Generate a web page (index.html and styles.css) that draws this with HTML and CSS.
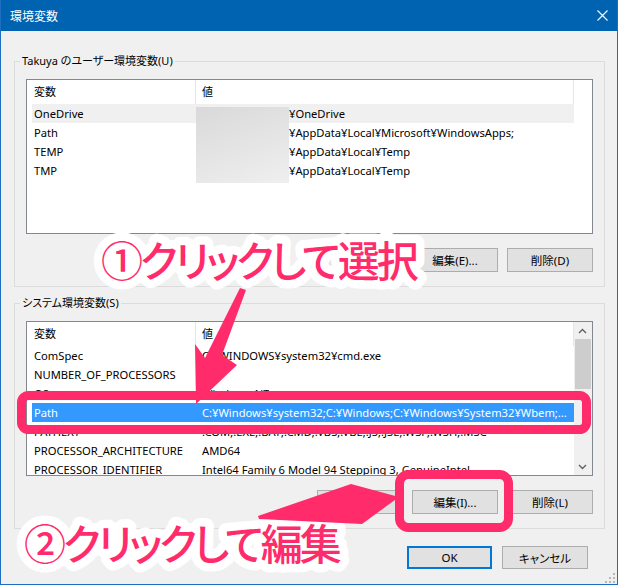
FILE: index.html
```html
<!DOCTYPE html>
<html lang="ja">
<head>
<meta charset="utf-8">
<title>環境変数</title>
<link rel="stylesheet" href="styles.css">
</head>
<body>
<div class="window">
  <div class="titlebar">
    <span class="title">環境変数</span>
    <svg class="close" width="11" height="11" viewBox="0 0 11 11"><path d="M0.5 0.5 L10.5 10.5 M10.5 0.5 L0.5 10.5" stroke="#fff" stroke-width="1.1" fill="none"/></svg>
  </div>
  <div class="content">
    <section class="group">
      <div class="group-label">Takuya のユーザー環境変数(U)</div>
      <div class="listview">
        <div class="lv-main">
          <div class="lv-head"><div class="h-name">変数</div><div class="h-val">値</div></div>
          <div class="row hot"><span class="c-name">OneDrive</span><span class="c-val"><span class="mask"></span>¥OneDrive</span></div>
          <div class="row"><span class="c-name">Path</span><span class="c-val"><span class="mask"></span>¥AppData¥Local¥Microsoft¥WindowsApps;</span></div>
          <div class="row"><span class="c-name">TEMP</span><span class="c-val"><span class="mask"></span>¥AppData¥Local¥Temp</span></div>
          <div class="row"><span class="c-name">TMP</span><span class="c-val"><span class="mask"></span>¥AppData¥Local¥Temp</span></div>
        </div>
        <div class="sb-space"></div>
        <div class="blur"></div>
      </div>
      <div class="btns">
        <button class="btn">新規(N)...</button>
        <button class="btn">編集(E)...</button>
        <button class="btn">削除(D)</button>
      </div>
    </section>

    <section class="group sys">
      <div class="group-label">システム環境変数(S)</div>
      <div class="listview">
        <div class="lv-main">
          <div class="lv-head"><div class="h-name">変数</div><div class="h-val">値</div></div>
          <div class="row"><span class="c-name">ComSpec</span><span class="c-val">C:¥WINDOWS¥system32¥cmd.exe</span></div>
          <div class="row"><span class="c-name">NUMBER_OF_PROCESSORS</span><span class="c-val">4</span></div>
          <div class="row"><span class="c-name">OS</span><span class="c-val">Windows_NT</span></div>
          <div class="row selected"><span class="c-name">Path</span><span class="c-val">C:¥Windows¥system32;C:¥Windows;C:¥Windows¥System32¥Wbem;...</span></div>
          <div class="row"><span class="c-name">PATHEXT</span><span class="c-val">.COM;.EXE;.BAT;.CMD;.VBS;.VBE;.JS;.JSE;.WSF;.WSH;.MSC</span></div>
          <div class="row"><span class="c-name">PROCESSOR_ARCHITECTURE</span><span class="c-val">AMD64</span></div>
          <div class="row"><span class="c-name">PROCESSOR_IDENTIFIER</span><span class="c-val">Intel64 Family 6 Model 94 Stepping 3, GenuineIntel</span></div>
        </div>
        <div class="scrollbar">
          <div class="sb-btn"><svg width="9" height="6" viewBox="0 0 9 6"><path d="M1 5 L4.5 1.5 L8 5" stroke="#606060" stroke-width="1.4" fill="none"/></svg></div>
          <div class="sb-thumb"></div>
          <div class="sb-track"></div>
          <div class="sb-btn"><svg width="9" height="6" viewBox="0 0 9 6"><path d="M1 1 L4.5 4.5 L8 1" stroke="#606060" stroke-width="1.4" fill="none"/></svg></div>
        </div>
      </div>
      <div class="btns">
        <button class="btn">新規(W)...</button>
        <button class="btn">編集(I)...</button>
        <button class="btn">削除(L)</button>
      </div>
    </section>

    <div class="footer">
      <button class="btn ok">OK</button>
      <button class="btn">キャンセル</button>
    </div>
  </div>
  <svg class="grip" width="10" height="10" viewBox="0 0 10 10" fill="#b8b8b8">
    <rect x="8" y="0" width="2" height="2"/><rect x="4" y="4" width="2" height="2"/><rect x="8" y="4" width="2" height="2"/>
    <rect x="0" y="8" width="2" height="2"/><rect x="4" y="8" width="2" height="2"/><rect x="8" y="8" width="2" height="2"/>
  </svg>
</div>

<svg class="annot" width="618" height="585" viewBox="0 0 618 585">
  <rect x="21.5" y="395.5" width="565" height="34" rx="7" fill="none" stroke="#ff2b6b" stroke-width="9"/>
  <rect x="399.5" y="474.5" width="109" height="53" rx="9" fill="none" stroke="#ff2b6b" stroke-width="9"/>
  <text class="note" x="101" y="277">①クリックして選択</text>
  <text class="note" x="24" y="560">②クリックして編集</text>
  <polygon fill="#ff2b6b" points="240,288 246,290 222,355 237,365 196,404 195,344 205,358"/>
  <polygon fill="#ff2b6b" points="258,516 351,484 399,497 362,524 259,519"/>
</svg>
</body>
</html>
```

FILE: styles.css
```css
* { box-sizing: border-box; }

html, body {
  margin: 0;
  padding: 0;
  background: #f0f0f0;
}

body {
  position: relative;
  width: 618px;
  height: 585px;
  font-family: "Noto Sans", "Noto Sans CJK JP", sans-serif;
  font-size: 11px;
  font-feature-settings: "palt";
  color: #000;
  overflow: hidden;
}

.window {
  position: relative;
  width: 618px;
  height: 585px;
  background: #f0f0f0;
  border-left: 1px solid #1f6fc0;
  border-right: 1px solid #1f6fc0;
  border-bottom: 1px solid #1f6fc0;
}

.titlebar {
  height: 31px;
  background: #0063b1;
  color: #fff;
  display: flex;
  align-items: center;
  justify-content: space-between;
  padding: 0 9px 0 9px;
  font-family: "Noto Sans CJK JP", sans-serif;
  font-size: 12px;
}

.title { line-height: 16px; }

.close { display: block; }

.content {
  padding: 0 12px 0 13px;
}

.group {
  margin-top: 30px;
  border: 1px solid #dcdcdc;
  padding: 0 11px 14px 11px;
}

.group.sys { margin-top: 16px; }

.group-label {
  width: fit-content;
  margin: -9px 0 0 -6px;
  padding: 0 2px;
  height: 16px;
  line-height: 16px;
  background: #f0f0f0;
}

.listview {
  position: relative;
  margin-top: 10px;
  height: 155px;
  border: 1px solid #828790;
  background: #fff;
  display: flex;
}

.lv-main {
  width: 547px;
  overflow: hidden;
}

.sb-space { flex: 1; }

.lv-head {
  display: flex;
  height: 24px;
  line-height: 24px;
}

.h-name {
  width: 169px;
  padding-left: 7px;
  border-right: 1px solid #e5e5e5;
}

.h-val {
  width: 378px;
  padding-left: 6px;
  border-right: 1px solid #e5e5e5;
}

.row {
  display: flex;
  margin-left: 5px;
  width: 542px;
  height: 19px;
  line-height: 19px;
  white-space: nowrap;
  font-size: 11.2px;
}

.row.hot { background: #f0f0f0; }

.row.selected {
  background: #3399ff;
  color: #fff;
}

.c-name {
  width: 170px;
  flex: none;
  padding-left: 2px;
}

.c-val { overflow: hidden; }

.mask {
  display: inline-block;
  width: 87px;
}

.blur {
  position: absolute;
  left: 169px;
  top: 27px;
  width: 93px;
  height: 76px;
  background: linear-gradient(160deg, #d9d9d9 0%, #e3e3e3 45%, #efefef 100%);
}

.scrollbar {
  width: 18px;
  background: #f0f0f0;
  display: flex;
  flex-direction: column;
  padding-right: 1px;
}

.sb-btn {
  height: 17px;
  display: flex;
  align-items: center;
  justify-content: center;
}

.sb-thumb {
  height: 50px;
  margin: 0 0 0 1px;
  background: #cdcdcd;
}

.sb-track { flex: 1; }

.btns {
  display: flex;
  justify-content: flex-end;
  gap: 9px;
  margin-top: 14px;
}

.btn {
  width: 86px;
  height: 24px;
  margin: 0;
  padding: 0;
  border: 1px solid #adadad;
  background: #e1e1e1;
  font-family: "Noto Sans", "Noto Sans CJK JP", sans-serif;
  font-size: 11.5px;
  font-feature-settings: "palt";
  color: #000;
}

.footer {
  display: flex;
  justify-content: flex-end;
  gap: 10px;
  margin-top: 17px;
  padding-right: 17px;
}

.footer .btn { height: 23px; }

.btn.ok {
  width: 85px;
  border: 2px solid #0078d7;
}

.grip {
  position: absolute;
  right: 2px;
  bottom: 1px;
}

.annot {
  position: absolute;
  left: 0;
  top: 0;
  pointer-events: none;
}

.note {
  font-family: "Noto Sans CJK JP", sans-serif;
  font-size: 42px;
  font-weight: 500;
  font-feature-settings: "palt";
  letter-spacing: -3px;
  fill: #ff2b6b;
  stroke: #fff;
  stroke-width: 17px;
  stroke-linejoin: round;
  paint-order: stroke;
}
```
